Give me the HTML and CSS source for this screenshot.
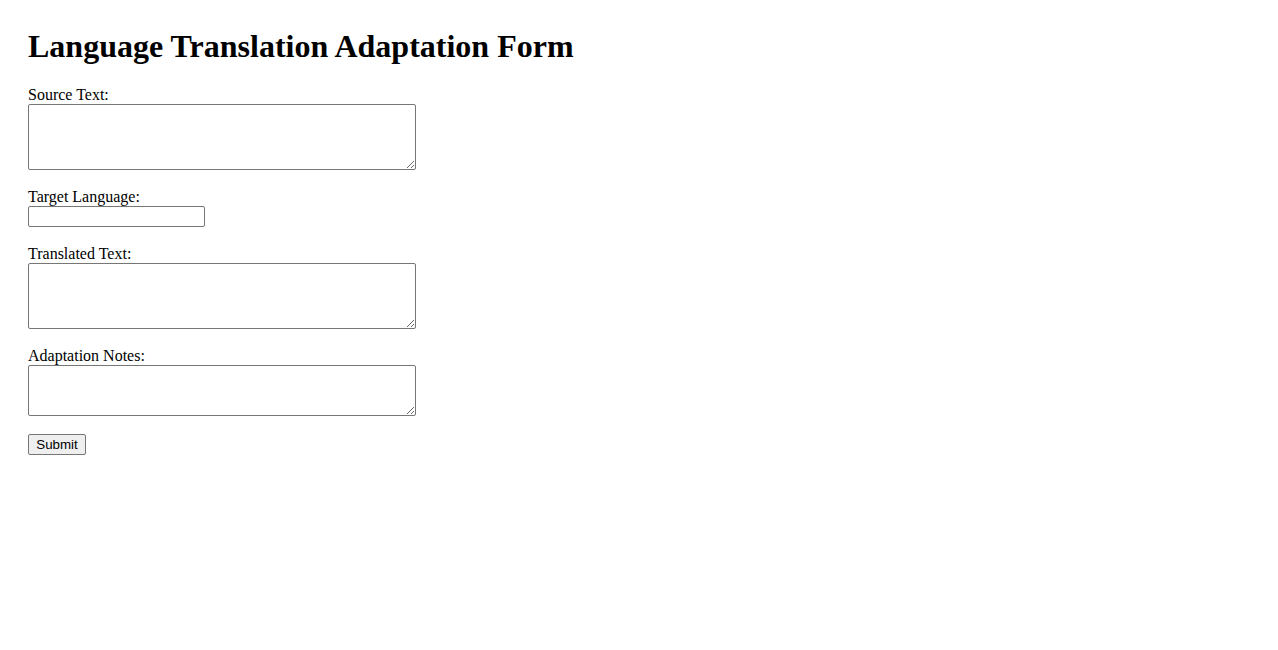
FILE: index.html
```html
<!DOCTYPE html>
<html lang="en">
<head>
<meta charset="utf-8">
<title>Language Translation Adaptation Form</title>
<link rel="stylesheet" href="styles.css">
</head>
<body>
<div class="page">
  <h1 class="title">Language Translation Adaptation Form</h1>
  <form class="form">
    <div class="field">
      <label class="label" for="source">Source Text:</label>
      <textarea class="area area-tall" id="source"></textarea>
    </div>
    <div class="field">
      <label class="label" for="target">Target Language:</label>
      <input class="text-input" id="target" type="text">
    </div>
    <div class="field">
      <label class="label" for="translated">Translated Text:</label>
      <textarea class="area area-tall" id="translated"></textarea>
    </div>
    <div class="field">
      <label class="label" for="notes">Adaptation Notes:</label>
      <textarea class="area area-short" id="notes"></textarea>
    </div>
    <button class="submit" type="submit">Submit</button>
  </form>
</div>
</body>
</html>
```

FILE: styles.css
```css
html, body {
  margin: 0;
  padding: 0;
  background: #ffffff;
}

.page {
  padding: 28px;
  font-family: "Liberation Serif", "Times New Roman", serif;
  color: #000000;
}

.title {
  margin: 0 0 21px;
  font-size: 32px;
  line-height: 37px;
  font-weight: bold;
}

.form {
  margin: 0;
}

.field {
  margin-bottom: 18px;
}

.label {
  display: block;
  font-size: 16px;
  line-height: 18px;
}

.area {
  display: block;
  box-sizing: border-box;
  width: 388px;
  margin: 0;
  padding: 2px;
  border: 1px solid #767676;
  border-radius: 2px;
  font-family: "Liberation Mono", monospace;
  font-size: 13px;
  background: #ffffff;
  resize: both;
}

.area-tall {
  height: 66px;
}

.area-short {
  height: 51px;
}

.text-input {
  display: block;
  box-sizing: border-box;
  width: 177px;
  height: 21px;
  margin: 0;
  padding: 1px 2px;
  border: 1px solid #767676;
  border-radius: 2px;
  font-family: "Liberation Sans", Arial, sans-serif;
  font-size: 13px;
  background: #ffffff;
}

.submit {
  display: block;
  box-sizing: border-box;
  width: 58px;
  height: 21px;
  margin: 0;
  padding: 1px 6px;
  border: 1px solid #767676;
  border-radius: 2px;
  background: #efefef;
  color: #000000;
  font-family: "Liberation Sans", Arial, sans-serif;
  font-size: 13.33px;
  line-height: 15px;
}
```
